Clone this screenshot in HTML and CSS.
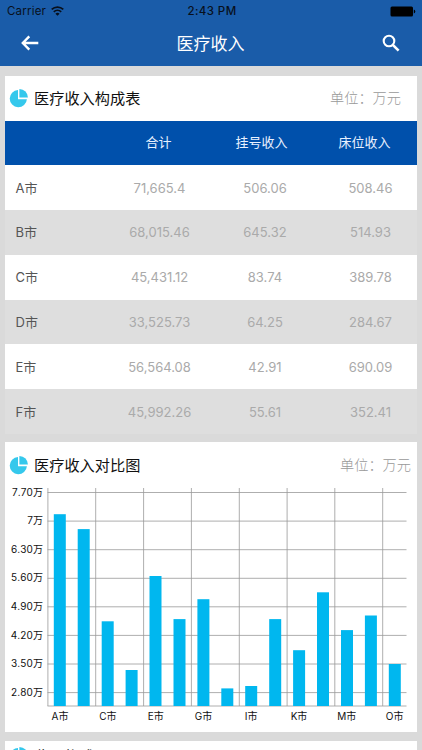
FILE: index.html
```html
<!DOCTYPE html>
<html lang="zh-CN">
<head>
    <meta charset="UTF-8">
    <meta name="viewport" content="width=device-width, initial-scale=1">
    <title>医疗收入</title>
    <link rel="stylesheet" href="styles.css">
</head>
<body>
    <svg class="symbols" aria-hidden="true">
        <symbol id="pie" viewBox="0 0 20 20">
            <path d="M9 2A8.6 8.6 0 1 0 17.9 11.2H9Z" fill="#35c8ec"/>
            <path d="M10.4 .9A8.5 8.5 0 0 1 18.9 9.6H10.4Z" fill="#35c8ec"/>
        </symbol>
    </svg>

    <header class="header">
        <div class="status">
            <div class="carrier">
                <span>Carrier</span>
                <svg width="13" height="10" viewBox="0 0 13 10" fill="none" stroke="#08101c" stroke-width="1.7">
                    <path d="M.7 3.4A8.4 8.4 0 0 1 12.3 3.4"/>
                    <path d="M2.8 5.8A5.4 5.4 0 0 1 10.2 5.8"/>
                    <path d="M6.5 9.7L4.4 7.7A3 3 0 0 1 8.6 7.7Z" fill="#08101c" stroke="none"/>
                </svg>
            </div>
            <div class="time">2:43 PM</div>
            <svg class="battery" width="26" height="11" viewBox="0 0 26 11">
                <rect x=".5" y=".5" width="22.5" height="10" rx="1.5"/>
                <path d="M23.8 3.5Q25.3 4 25.3 5.5T23.8 7.5Z"/>
            </svg>
        </div>
        <nav class="nav">
            <svg width="18" height="16" viewBox="0 0 18 16" fill="none" stroke="#fff" stroke-width="2.4">
                <path d="M17.3 8H2M8.3 1.4L1.8 8L8.3 14.6"/>
            </svg>
            <h1>医疗收入</h1>
            <svg width="18" height="18" viewBox="0 0 18 18" fill="none" stroke="#fff" stroke-width="2.1">
                <circle cx="7" cy="7" r="5.3"/>
                <path d="M10.8 10.8L16.6 16.6" stroke-width="2.6"/>
            </svg>
        </nav>
    </header>

    <main>
        <section class="card">
            <div class="card-title">
                <svg class="pie"><use href="#pie"/></svg>
                <h2>医疗收入构成表</h2>
                <span class="unit unit-table">单位：万元</span>
            </div>
            <table class="income">
                <thead>
                    <tr><th></th><th>合计</th><th>挂号收入</th><th>床位收入</th></tr>
                </thead>
                <tbody>
                    <tr><td>A市</td><td>71,665.4</td><td>506.06</td><td>508.46</td></tr>
                    <tr><td>B市</td><td>68,015.46</td><td>645.32</td><td>514.93</td></tr>
                    <tr><td>C市</td><td>45,431.12</td><td>83.74</td><td>389.78</td></tr>
                    <tr><td>D市</td><td>33,525.73</td><td>64.25</td><td>284.67</td></tr>
                    <tr><td>E市</td><td>56,564.08</td><td>42.91</td><td>690.09</td></tr>
                    <tr><td>F市</td><td>45,992.26</td><td>55.61</td><td>352.41</td></tr>
                </tbody>
            </table>
        </section>

        <section class="card chart-card">
            <div class="card-title">
                <svg class="pie"><use href="#pie"/></svg>
                <h2>医疗收入对比图</h2>
                <span class="unit">单位：万元</span>
            </div>
            <svg class="chart" width="411" height="244" viewBox="0 0 411 244">
                <!-- grid -->
                <path class="grid" d="M42.5 4.5H401.5M42.5 33.1H401.5M42.5 61.7H401.5M42.5 90.3H401.5M42.5 118.8H401.5M42.5 147.4H401.5M42.5 176H401.5M42.5 204.6H401.5"/>
                <path class="grid" d="M42.9 0V218M90.7 0V218M138.6 0V218M186.4 0V218M234.3 0V218M282.1 0V218M329.8 0V218M377.7 0V218"/>
                <path class="grid" d="M42.5 218H401.5"/>
                <!-- bars -->
                <g class="bars">
                    <rect x="48.8" y="26.2" width="12" height="191.8"/>
                    <rect x="72.7" y="41.1" width="12" height="176.9"/>
                    <rect x="96.7" y="133.3" width="12" height="84.7"/>
                    <rect x="120.6" y="182" width="12" height="36"/>
                    <rect x="144.5" y="88" width="12" height="130"/>
                    <rect x="168.5" y="131.1" width="12" height="86.9"/>
                    <rect x="192.4" y="111.2" width="12" height="106.8"/>
                    <rect x="216.3" y="200.4" width="12" height="17.6"/>
                    <rect x="240.2" y="198" width="12" height="20"/>
                    <rect x="264.2" y="131.1" width="12" height="86.9"/>
                    <rect x="288.1" y="162.2" width="12" height="55.8"/>
                    <rect x="312" y="104.3" width="12" height="113.7"/>
                    <rect x="336" y="142.1" width="12" height="75.9"/>
                    <rect x="359.9" y="127.5" width="12" height="90.5"/>
                    <rect x="383.8" y="176" width="12" height="42"/>
                </g>
                <g class="y-labels">
                    <text x="38" y="7.6">7.70万</text>
                    <text x="38" y="36.2">7万</text>
                    <text x="38" y="64.8">6.30万</text>
                    <text x="38" y="93.4">5.60万</text>
                    <text x="38" y="122">4.90万</text>
                    <text x="38" y="150.6">4.20万</text>
                    <text x="38" y="179.1">3.50万</text>
                    <text x="38" y="207.7">2.80万</text>
                </g>
                <g class="x-labels">
                    <text x="55" y="232">A市</text>
                    <text x="102.8" y="232">C市</text>
                    <text x="150.7" y="232">E市</text>
                    <text x="198.6" y="232">G市</text>
                    <text x="246.2" y="232">I市</text>
                    <text x="294" y="232">K市</text>
                    <text x="341.8" y="232">M市</text>
                    <text x="389.7" y="232">O市</text>
                </g>
            </svg>
        </section>

        <section class="card next-card">
            <div class="card-title">
                <svg class="pie"><use href="#pie"/></svg>
                <h2>收入构成</h2>
            </div>
        </section>
    </main>
</body>
</html>
```
FILE: styles.css
```css
* {
    box-sizing: border-box;
}
body {
    margin: 0;
    height: 750px;
    overflow: hidden;
    background-color: #dadada;
    font-family: Inter, "Noto Sans CJK SC", sans-serif;
}
.symbols {
    display: none;
}

.header {
    height: 65.5px;
    background-color: #1a5ca9;
}
.status {
    display: grid;
    grid-template-columns: 1fr auto 1fr;
    align-items: center;
    height: 22px;
    padding: 0 6px 0 7px;
    font-size: 11.5px;
    color: #08101c;
}
.carrier {
    display: flex;
    align-items: center;
    gap: 5px;
    letter-spacing: 0.2px;
}
.time {
    padding-left: 1px;
    font-weight: 500;
    letter-spacing: 0.4px;
}
.battery {
    justify-self: end;
    fill: #000;
}
.nav {
    display: flex;
    justify-content: space-between;
    align-items: center;
    height: 41px;
    padding: 0 22px 0 21px;
}
.nav h1 {
    margin: 0;
    font-size: 17px;
    font-weight: 400;
    color: #fff;
}

main {
    display: flex;
    flex-direction: column;
    gap: 8px;
    padding: 10px 5px 0;
}
.card {
    background-color: #fff;
}
.chart-card {
    height: 290px;
}
.card-title {
    display: flex;
    align-items: center;
    height: 45px;
    padding: 0 6px 0 4px;
}
.chart-card .card-title {
    height: 45.7px;
}
.next-card {
    margin-top: 0.5px;
}
.next-card .card-title {
    height: 30px;
}
.pie {
    width: 20px;
    height: 20px;
}
.card-title h2 {
    margin: 0 0 2px 5px;
    font-size: 15.2px;
    font-weight: 400;
    color: #111;
}
.unit {
    margin-bottom: 2px;
    margin-left: auto;
    font-size: 14.2px;
    font-weight: 300;
    color: #999;
}
.unit-table {
    margin-right: 10px;
}

.income {
    width: 100%;
    table-layout: fixed;
    border-collapse: collapse;
    font-size: 13px;
    text-align: center;
}
.income tr {
    height: 44.8px;
}
.income th, .income td {
    padding: 0;
}
.income th {
    padding: 0 2px 2px 0;
    background-color: #0050ab;
    font-weight: 400;
    color: #e8f1ff;
}
.income td {
    color: #aaa;
}
.income td:first-child {
    padding: 0 0 1px 10.5px;
    text-align: left;
    color: #555;
}
.income tbody tr:nth-child(even) {
    background-color: #dedede;
}
.income td:nth-child(3) {
    padding-left: 5px;
}
.income td:nth-child(4) {
    padding-left: 10px;
}

.chart {
    display: block;
}
.grid {
    fill: none;
    stroke: #999;
    stroke-width: 0.8;
}
.bars {
    fill: #00b7ef;
}
.y-labels, .x-labels {
    font-size: 10px;
    font-kerning: none;
    fill: #111;
}
.y-labels {
    text-anchor: end;
    letter-spacing: 0.1px;
}
.x-labels {
    text-anchor: middle;
}
```
